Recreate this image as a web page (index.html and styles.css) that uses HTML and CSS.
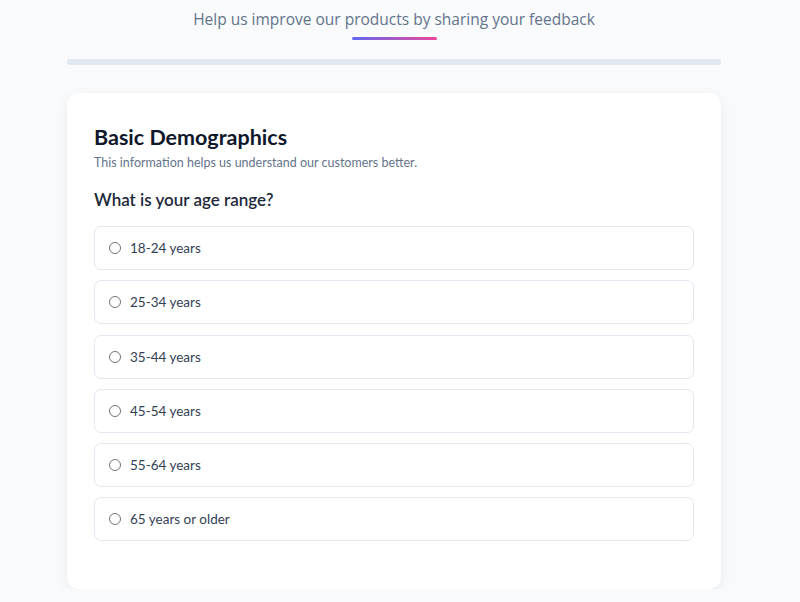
FILE: index.html
```html
<!DOCTYPE html>
<html>
<head>
    <meta charset="UTF-8">
    <title>Customer Feedback Survey</title>
    <link rel="stylesheet" href="styles.css">
</head>
<body>
<div class="survey-wrapper">
    <header class="survey-header">
        <p class="survey-tagline">Help us improve our products by sharing your feedback</p>
        <div class="tagline-accent"></div>
    </header>

    <div class="progress-track">
        <div class="progress-fill" style="width:0%"></div>
    </div>

    <section class="survey-card">
        <h2 class="section-title">Basic Demographics</h2>
        <p class="section-desc">This information helps us understand our customers better.</p>

        <h3 class="question">What is your age range?</h3>
        <div class="option-list">
            <label class="option"><input type="radio" name="age" value="18-24"><span>18-24 years</span></label>
            <label class="option"><input type="radio" name="age" value="25-34"><span>25-34 years</span></label>
            <label class="option"><input type="radio" name="age" value="35-44"><span>35-44 years</span></label>
            <label class="option"><input type="radio" name="age" value="45-54"><span>45-54 years</span></label>
            <label class="option"><input type="radio" name="age" value="55-64"><span>55-64 years</span></label>
            <label class="option"><input type="radio" name="age" value="65+"><span>65 years or older</span></label>
        </div>
    </section>
</div>
</body>
</html>
```

FILE: styles.css
```css
body {
    margin: 0;
    background-color: #f8fafc;
    font-family: Lato, "Noto Sans", sans-serif;
    color: #1e293b;
}

.survey-wrapper {
    width: 654px;
    margin-left: 67px;
}

.survey-header {
    text-align: center;
    padding-top: 8px;
}

.survey-tagline {
    margin: 0;
    font-family: "Open Sans", sans-serif;
    font-size: 15.5px;
    line-height: 22px;
    color: #64748b;
}

.tagline-accent {
    width: 85px;
    height: 3px;
    margin: 7px auto 0;
    border-radius: 2px;
    background: linear-gradient(90deg, #6366f1, #ec4899);
}

.progress-track {
    height: 6px;
    margin-top: 19px;
    border-radius: 3px;
    background-color: #e2e8f0;
    overflow: hidden;
}

.progress-fill {
    height: 100%;
    background-color: #6366f1;
}

.survey-card {
    margin-top: 28px;
    padding: 30px 27px 48px;
    background-color: #ffffff;
    border-radius: 12px;
    box-shadow: 0 4px 14px rgba(15, 23, 42, 0.06);
}

.section-title {
    margin: 0;
    font-size: 21.5px;
    line-height: 28px;
    font-weight: 700;
    color: #0f172a;
}

.section-desc {
    margin: 4px 0 0;
    font-size: 12.5px;
    line-height: 16px;
    color: #64748b;
}

.question {
    margin: 17px 0 0;
    font-size: 17px;
    line-height: 24px;
    font-weight: 600;
    color: #1e293b;
}

.option-list {
    display: flex;
    flex-direction: column;
    gap: 10.3px;
    margin-top: 14px;
}

.option {
    display: flex;
    align-items: center;
    gap: 9px;
    height: 42px;
    padding: 0 14px;
    border: 1px solid #e2e8f0;
    border-radius: 7px;
    font-size: 13.5px;
    color: #334155;
    cursor: pointer;
}

.option input[type="radio"] {
    margin: 0;
    width: 12px;
    height: 12px;
    appearance: none;
    border: 1px solid #71717a;
    border-radius: 50%;
    background: #fff;
}

.option input[type="radio"]:checked {
    border: 3px solid #6366f1;
}
```
